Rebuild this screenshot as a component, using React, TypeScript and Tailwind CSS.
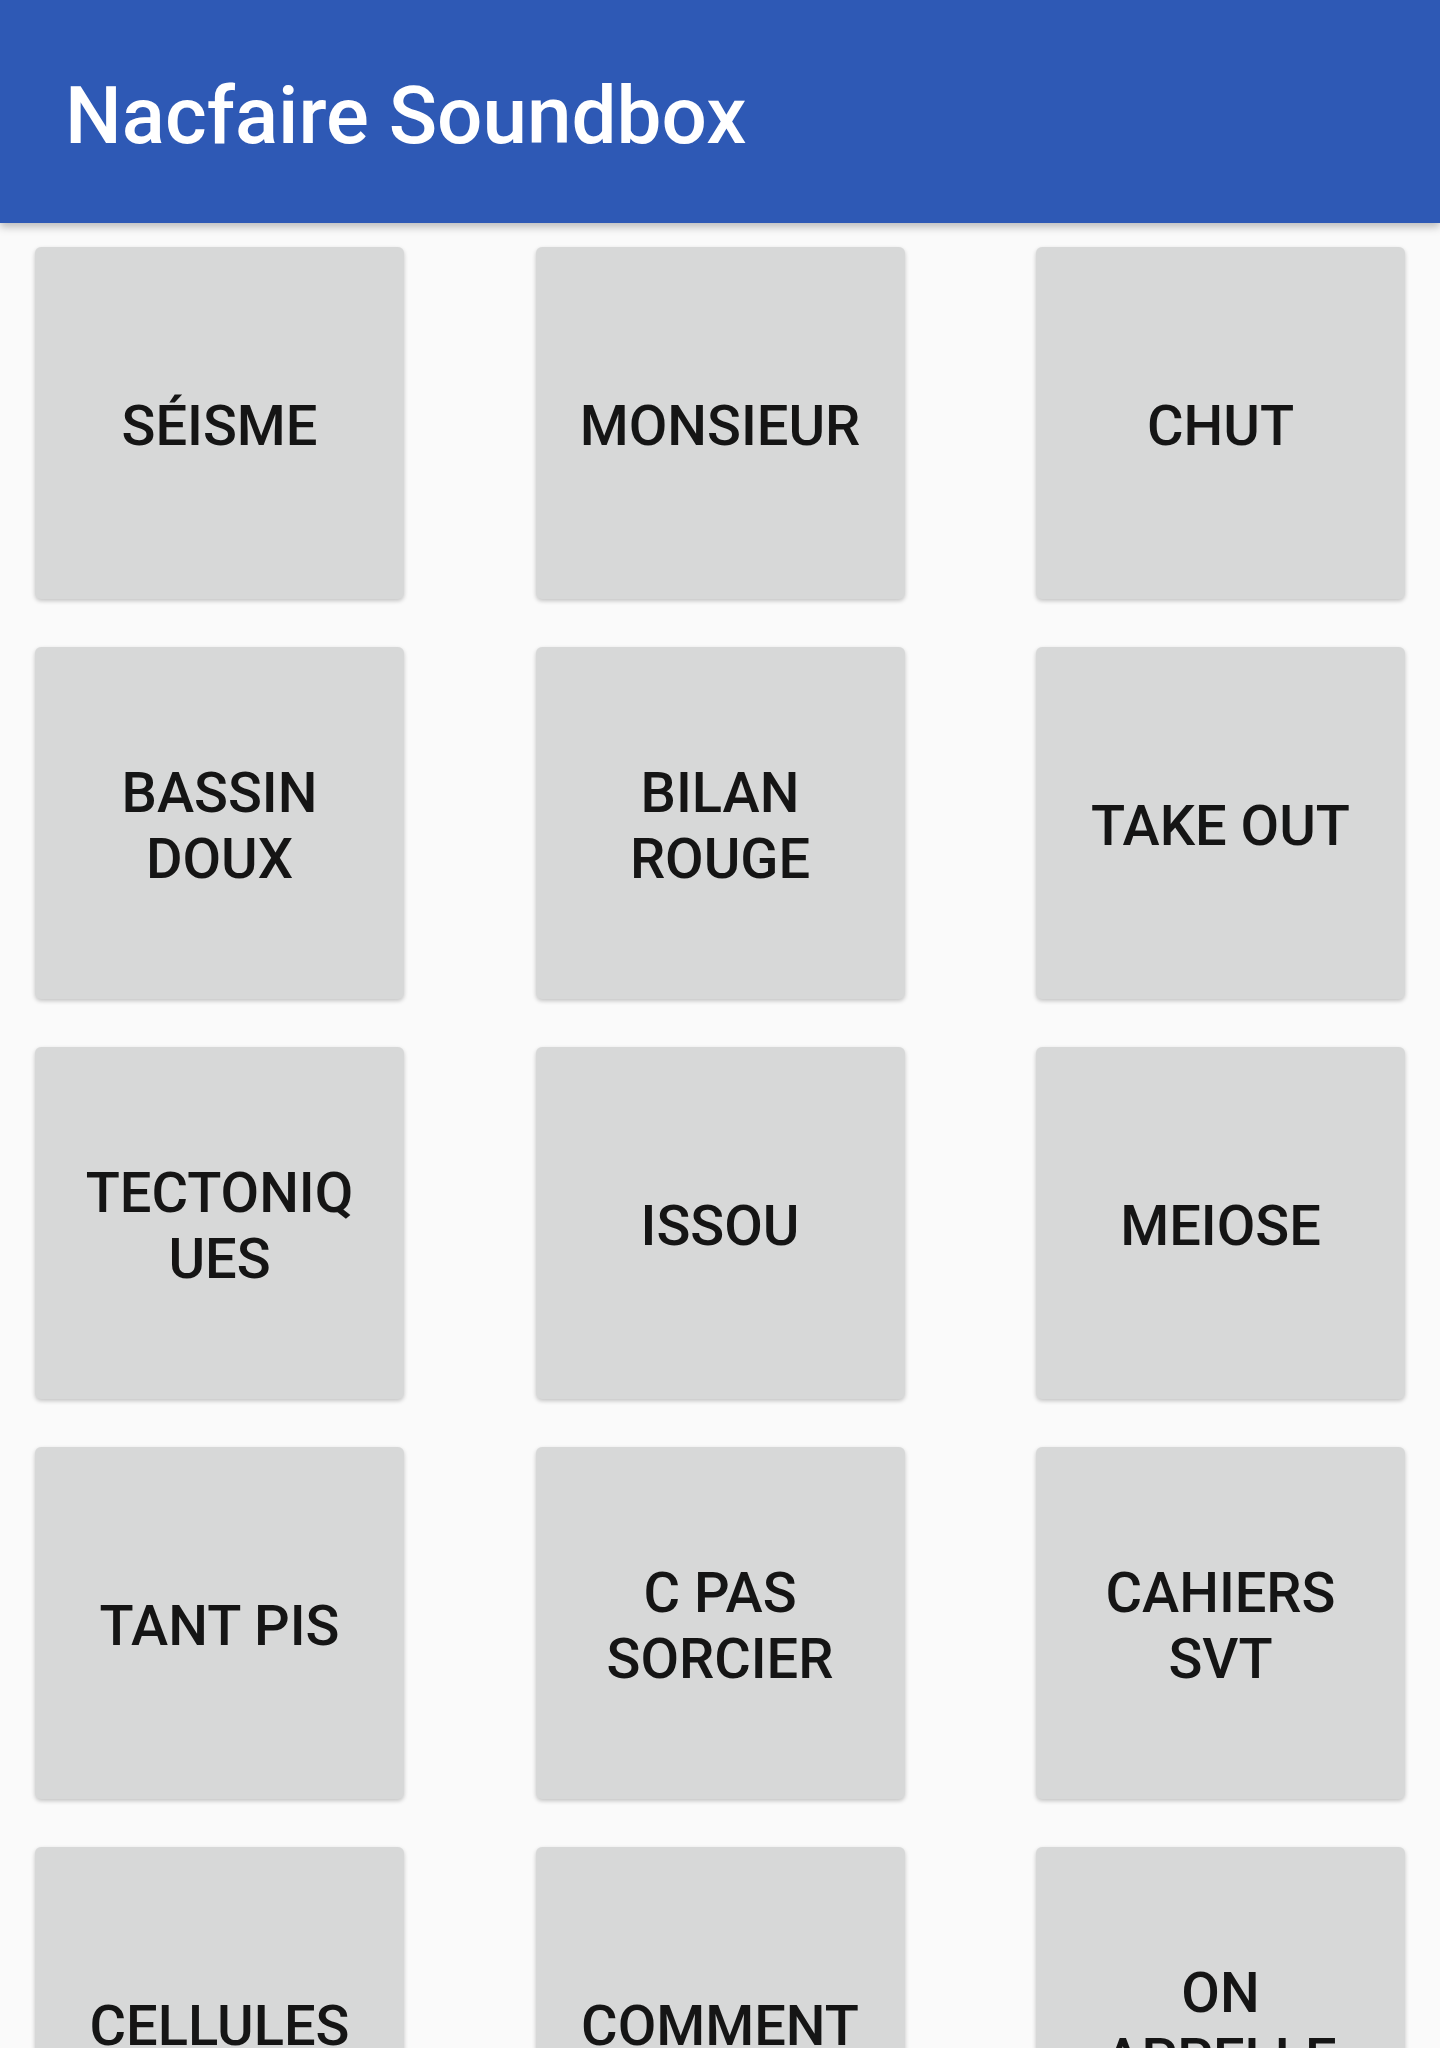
const sounds = [
  'SÉISME',
  'MONSIEUR',
  'CHUT',
  'BASSIN DOUX',
  'BILAN ROUGE',
  'TAKE OUT',
  'TECTONIQUES',
  'ISSOU',
  'MEIOSE',
  'TANT PIS',
  'C PAS SORCIER',
  'CAHIERS SVT',
  'CELLULES',
  'COMMENT',
  'ON APPELLE',
];

export default function App() {
  return (
    <div
      className="h-[2048px] overflow-hidden bg-[#fafafa]"
      style={{ fontFamily: 'Roboto, "Noto Sans", sans-serif' }}
    >
      <header className="relative z-10 flex h-[223px] items-center bg-[#2e59b5] pl-[65px] pt-[8px] shadow-[0_4px_8px_rgba(0,0,0,0.25)]">
        <h1 className="text-[80px] font-medium leading-none text-white">Nacfaire Soundbox</h1>
      </header>

      <div className="grid grid-cols-[369px_369px_369px] justify-between gap-y-[48px] px-[35px] pt-[24px]">
        {sounds.map((name) => (
          <button
            key={name}
            className="flex h-[352px] items-center justify-center rounded-[6px] bg-[#d7d8d8] px-[40px] pt-[6px] text-center text-[56px] font-medium leading-[66px] text-[#151515] shadow-[0_2px_4px_rgba(0,0,0,0.22)]"
          >
            <span className="w-full break-words">{name}</span>
          </button>
        ))}
      </div>
    </div>
  );
}
